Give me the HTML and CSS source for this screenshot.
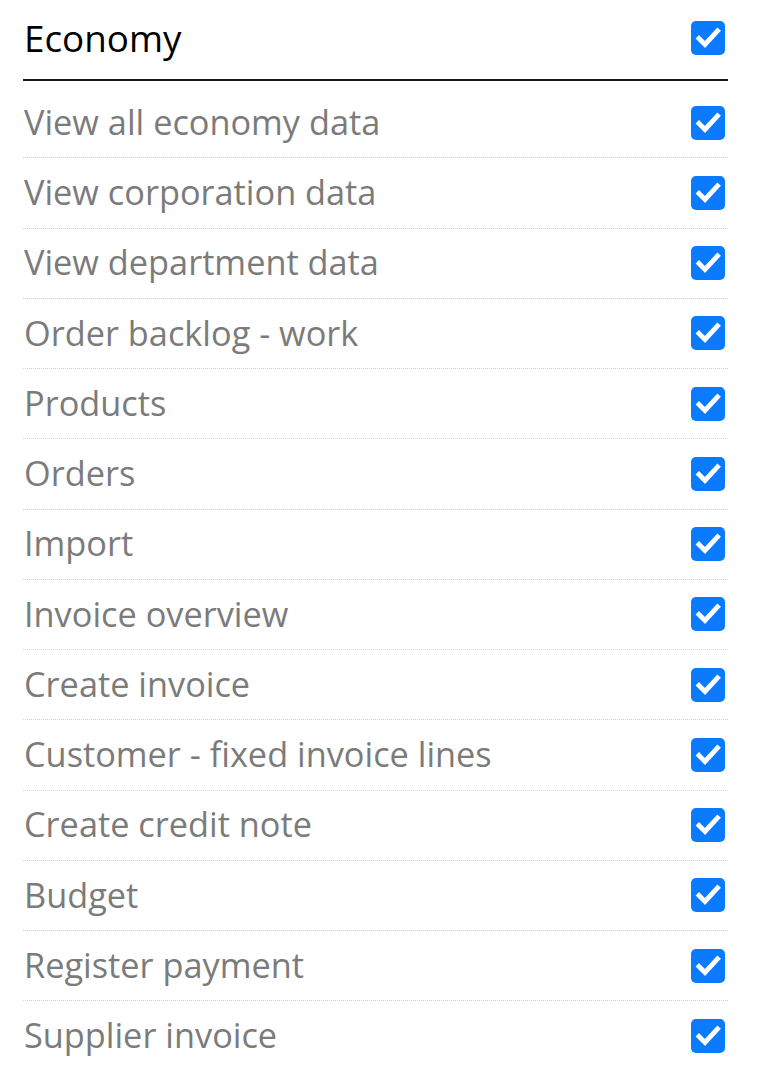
FILE: index.html
```html
<!DOCTYPE html>
<html lang="en">
<head>
<meta charset="utf-8">
<title>Economy permissions</title>
<link rel="stylesheet" href="styles.css">
</head>
<body>
<div class="panel">
  <div class="header">
    <span class="header-title">Economy</span>
    <span class="check"><svg viewBox="0 0 34 34" width="34" height="34"><path d="M8 17.5 L14 23.5 L26.5 10" fill="none" stroke="#fff" stroke-width="4.8" stroke-linecap="square"/></svg></span>
  </div>
  <ul class="list">
    <li class="row"><span class="label">View all economy data</span><span class="check"><svg viewBox="0 0 34 34" width="34" height="34"><path d="M8 17.5 L14 23.5 L26.5 10" fill="none" stroke="#fff" stroke-width="4.8" stroke-linecap="square"/></svg></span></li>
    <li class="row"><span class="label">View corporation data</span><span class="check"><svg viewBox="0 0 34 34" width="34" height="34"><path d="M8 17.5 L14 23.5 L26.5 10" fill="none" stroke="#fff" stroke-width="4.8" stroke-linecap="square"/></svg></span></li>
    <li class="row"><span class="label">View department data</span><span class="check"><svg viewBox="0 0 34 34" width="34" height="34"><path d="M8 17.5 L14 23.5 L26.5 10" fill="none" stroke="#fff" stroke-width="4.8" stroke-linecap="square"/></svg></span></li>
    <li class="row"><span class="label">Order backlog - work</span><span class="check"><svg viewBox="0 0 34 34" width="34" height="34"><path d="M8 17.5 L14 23.5 L26.5 10" fill="none" stroke="#fff" stroke-width="4.8" stroke-linecap="square"/></svg></span></li>
    <li class="row"><span class="label">Products</span><span class="check"><svg viewBox="0 0 34 34" width="34" height="34"><path d="M8 17.5 L14 23.5 L26.5 10" fill="none" stroke="#fff" stroke-width="4.8" stroke-linecap="square"/></svg></span></li>
    <li class="row"><span class="label">Orders</span><span class="check"><svg viewBox="0 0 34 34" width="34" height="34"><path d="M8 17.5 L14 23.5 L26.5 10" fill="none" stroke="#fff" stroke-width="4.8" stroke-linecap="square"/></svg></span></li>
    <li class="row"><span class="label">Import</span><span class="check"><svg viewBox="0 0 34 34" width="34" height="34"><path d="M8 17.5 L14 23.5 L26.5 10" fill="none" stroke="#fff" stroke-width="4.8" stroke-linecap="square"/></svg></span></li>
    <li class="row"><span class="label">Invoice overview</span><span class="check"><svg viewBox="0 0 34 34" width="34" height="34"><path d="M8 17.5 L14 23.5 L26.5 10" fill="none" stroke="#fff" stroke-width="4.8" stroke-linecap="square"/></svg></span></li>
    <li class="row"><span class="label">Create invoice</span><span class="check"><svg viewBox="0 0 34 34" width="34" height="34"><path d="M8 17.5 L14 23.5 L26.5 10" fill="none" stroke="#fff" stroke-width="4.8" stroke-linecap="square"/></svg></span></li>
    <li class="row"><span class="label">Customer - fixed invoice lines</span><span class="check"><svg viewBox="0 0 34 34" width="34" height="34"><path d="M8 17.5 L14 23.5 L26.5 10" fill="none" stroke="#fff" stroke-width="4.8" stroke-linecap="square"/></svg></span></li>
    <li class="row"><span class="label">Create credit note</span><span class="check"><svg viewBox="0 0 34 34" width="34" height="34"><path d="M8 17.5 L14 23.5 L26.5 10" fill="none" stroke="#fff" stroke-width="4.8" stroke-linecap="square"/></svg></span></li>
    <li class="row"><span class="label">Budget</span><span class="check"><svg viewBox="0 0 34 34" width="34" height="34"><path d="M8 17.5 L14 23.5 L26.5 10" fill="none" stroke="#fff" stroke-width="4.8" stroke-linecap="square"/></svg></span></li>
    <li class="row"><span class="label">Register payment</span><span class="check"><svg viewBox="0 0 34 34" width="34" height="34"><path d="M8 17.5 L14 23.5 L26.5 10" fill="none" stroke="#fff" stroke-width="4.8" stroke-linecap="square"/></svg></span></li>
    <li class="row last"><span class="label">Supplier invoice</span><span class="check"><svg viewBox="0 0 34 34" width="34" height="34"><path d="M8 17.5 L14 23.5 L26.5 10" fill="none" stroke="#fff" stroke-width="4.8" stroke-linecap="square"/></svg></span></li>
  </ul>
</div>
</body>
</html>
```

FILE: styles.css
```css
html, body {
  margin: 0;
  padding: 0;
  background: #fff;
}

body {
  font-family: "Open Sans", "Noto Sans", "Liberation Sans", sans-serif;
}

.panel {
  padding: 0 34px 0 23px;
}

.header {
  display: flex;
  align-items: center;
  justify-content: space-between;
  height: 76px;
  padding-bottom: 3px;
  border-bottom: 2px solid #1b1b1b;
}

.header-title {
  font-size: 36.8px;
  color: #000;
  padding-left: 1px;
  line-height: 1;
}

.check {
  display: flex;
  width: 34px;
  height: 34px;
  border-radius: 5px;
  background: #0a7aff;
  margin-right: 3px;
  flex: none;
}

.check svg {
  display: block;
}

.list {
  list-style: none;
  margin: 0;
  padding: 7px 0 0 0;
}

.row {
  display: flex;
  align-items: center;
  justify-content: space-between;
  height: 69.25px;
  border-bottom: 1px dotted #cfcfcf;
}

.row.last {
  border-bottom: none;
}

.label {
  font-size: 34.3px;
  color: #7b7b7b;
  line-height: 1;
  padding-left: 1px;
  margin-top: -1px;
}
```
